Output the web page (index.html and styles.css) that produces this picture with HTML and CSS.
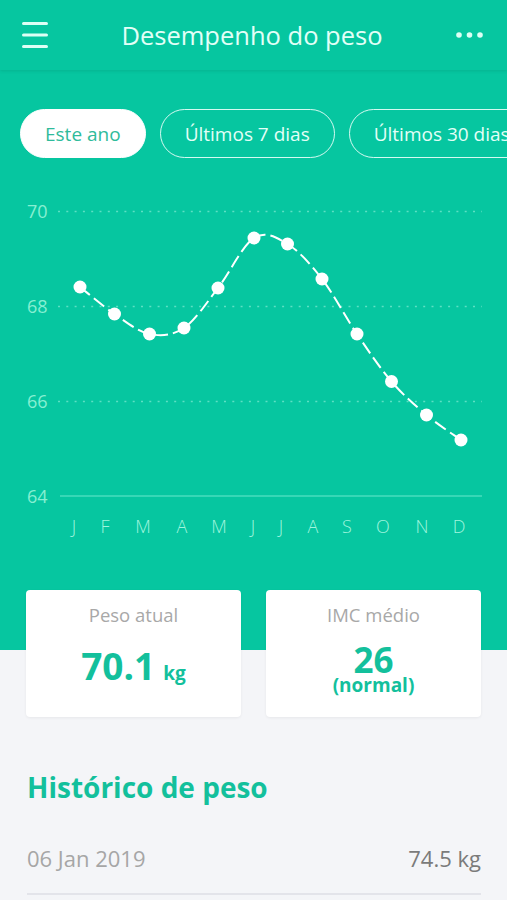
FILE: index.html
```html
<!DOCTYPE html>
<html lang="pt">
<head>
<meta charset="utf-8">
<title>Desempenho do peso</title>
<link rel="stylesheet" href="styles.css">
</head>
<body>
<div class="app">
  <section class="hero">
    <header class="topbar">
      <button class="icon-btn" aria-label="Menu">
        <svg width="26" height="26" viewBox="0 0 26 26"><g stroke="#dcfff5" stroke-width="3" stroke-linecap="round"><line x1="1.5" y1="1.5" x2="24.5" y2="1.5"/><line x1="1.5" y1="13" x2="24.5" y2="13"/><line x1="1.5" y1="24.5" x2="24.5" y2="24.5"/></g></svg>
      </button>
      <h1 class="title">Desempenho do peso</h1>
      <button class="icon-btn" aria-label="Mais">
        <svg width="27" height="8" viewBox="0 0 27 8"><g fill="#dcfff5"><circle cx="3" cy="4" r="2.8"/><circle cx="13.5" cy="4" r="2.8"/><circle cx="24" cy="4" r="2.8"/></g></svg>
      </button>
    </header>

    <nav class="filters">
      <span class="pill pill-active">Este ano</span>
      <span class="pill">Últimos 7 dias</span>
      <span class="pill">Últimos 30 dias</span>
    </nav>

    <svg class="chart" width="507" height="350" viewBox="0 0 507 350">
      <g class="grid">
        <line x1="58" y1="21.5" x2="482" y2="21.5" class="dotted"/>
        <line x1="58" y1="116.5" x2="482" y2="116.5" class="dotted"/>
        <line x1="58" y1="211.5" x2="482" y2="211.5" class="dotted"/>
        <line x1="60" y1="306" x2="482" y2="306" class="solid"/>
      </g>
      <g class="ylabels">
        <text x="27" y="28">70</text>
        <text x="27" y="123">68</text>
        <text x="27" y="218">66</text>
        <text x="27" y="313">64</text>
      </g>
      <path class="curve" d="M80,97 C85.75,101.5 102.92,116.17 114.5,124 C126.08,131.83 137.92,141.67 149.5,144 C161.08,146.33 172.58,145.67 184,138 C195.42,130.33 206.33,113 218,98 C229.67,83 242.42,55.33 254,48 C265.58,40.67 276.17,47.17 287.5,54 C298.83,60.83 310.42,74 322,89 C333.58,104 345.42,126.92 357,144 C368.58,161.08 379.92,178 391.5,191.5 C403.08,205 414.92,215.25 426.5,225 C438.08,234.75 455.25,245.83 461,250"/>
      <g class="points">
        <circle cx="80" cy="97" r="6.5"/>
        <circle cx="114.5" cy="124" r="6.5"/>
        <circle cx="149.5" cy="144" r="6.5"/>
        <circle cx="184" cy="138" r="6.5"/>
        <circle cx="218" cy="98" r="6.5"/>
        <circle cx="254" cy="48" r="6.5"/>
        <circle cx="287.5" cy="54" r="6.5"/>
        <circle cx="322" cy="89" r="6.5"/>
        <circle cx="357" cy="144" r="6.5"/>
        <circle cx="391.5" cy="191.5" r="6.5"/>
        <circle cx="426.5" cy="225" r="6.5"/>
        <circle cx="461" cy="250" r="6.5"/>
      </g>
      <g class="xlabels">
        <text x="74" y="343">J</text>
        <text x="105" y="343">F</text>
        <text x="143" y="343">M</text>
        <text x="182" y="343">A</text>
        <text x="219" y="343">M</text>
        <text x="253" y="343">J</text>
        <text x="281" y="343">J</text>
        <text x="313" y="343">A</text>
        <text x="347" y="343">S</text>
        <text x="383" y="343">O</text>
        <text x="422" y="343">N</text>
        <text x="459" y="343">D</text>
      </g>
    </svg>
  </section>

  <section class="stats">
    <div class="card">
      <div class="card-label">Peso atual</div>
      <div class="card-value"><span class="big">70.1</span><span class="unit">kg</span></div>
    </div>
    <div class="card">
      <div class="card-label">IMC médio</div>
      <div class="card-value card-value-col"><span class="big big-imc">26</span><span class="note">(normal)</span></div>
    </div>
  </section>

  <section class="history">
    <h2 class="history-title">Histórico de peso</h2>
    <ul class="history-list">
      <li class="history-row"><span class="date">06 Jan 2019</span><span class="weight">74.5 kg</span></li>
    </ul>
  </section>
</div>
</body>
</html>
```

FILE: styles.css
```css
* { box-sizing: border-box; }

html, body {
  margin: 0;
  padding: 0;
  background: #f4f5f8;
  font-family: "Open Sans", "Noto Sans", sans-serif;
}

.app {
  width: 507px;
  height: 900px;
  overflow: hidden;
}

.hero {
  background: #06c6a0;
  padding-bottom: 110px;
}

.topbar {
  height: 70px;
  display: flex;
  align-items: center;
  justify-content: space-between;
  padding: 0 24px 0 22px;
  box-shadow: 0 1px 3px rgba(0, 90, 70, 0.18);
}

.icon-btn {
  background: none;
  border: 0;
  padding: 0;
  display: flex;
  align-items: center;
  cursor: pointer;
}

.title {
  margin: 0;
  font-size: 25.5px;
  font-weight: 400;
  color: #e2fff7;
}

.filters {
  margin-top: 39px;
  padding-left: 20px;
  display: flex;
  gap: 14px;
  overflow: hidden;
  white-space: nowrap;
}

.pill {
  flex-shrink: 0;
  height: 49px;
  display: flex;
  align-items: center;
  padding: 0 24px;
  border: 1.5px solid rgba(235, 255, 250, 0.9);
  border-radius: 25px;
  font-size: 19px;
  color: #e2fff7;
}

.pill-active {
  background: #fff;
  border-color: #fff;
  color: #2fbb9b;
}

.chart {
  display: block;
  margin-top: 32px;
}

.grid .dotted {
  stroke: rgba(200, 255, 240, 0.45);
  stroke-width: 1.5;
  stroke-dasharray: 2 6.3;
}

.grid .solid {
  stroke: rgba(170, 255, 235, 0.6);
  stroke-width: 1.2;
}

.ylabels text {
  font-family: "Open Sans", sans-serif;
  font-size: 18px;
  fill: #86efd2;
}

.xlabels text {
  font-family: "Open Sans", sans-serif;
  font-size: 18px;
  font-weight: 300;
  fill: #a0f5de;
  text-anchor: middle;
}

.curve {
  fill: none;
  stroke: #fff;
  stroke-width: 2;
  stroke-dasharray: 13 5;
}

.points circle {
  fill: #fff;
}

.stats {
  margin-top: -60px;
  padding: 0 26px;
  display: grid;
  grid-template-columns: 1fr 1fr;
  gap: 25px;
}

.card {
  height: 127px;
  background: #fff;
  border-radius: 4px;
  box-shadow: 0 1px 3px rgba(0, 0, 0, 0.06);
  display: flex;
  flex-direction: column;
  align-items: center;
  padding-top: 13px;
}

.card-label {
  font-size: 18.5px;
  color: #a8a8a8;
  line-height: 24px;
}

.card-value {
  margin-top: 19px;
  display: flex;
  align-items: baseline;
  gap: 8px;
  color: #13c09c;
  font-weight: 700;
}

.card-value-col {
  margin-top: 18px;
  flex-direction: column;
  align-items: center;
  gap: 0;
}

.big {
  font-size: 37px;
  line-height: 40px;
}

.big-imc {
  font-size: 35px;
  line-height: 30px;
}

.unit {
  font-size: 19px;
}

.note {
  font-size: 19px;
  line-height: 20px;
}

.history {
  padding: 0 26px 0 27px;
}

.history-title {
  margin: 52px 0 0;
  font-size: 28px;
  line-height: 36px;
  font-weight: 700;
  color: #13c09c;
}

.history-list {
  list-style: none;
  margin: 39px 0 0;
  padding: 0;
}

.history-row {
  display: flex;
  justify-content: space-between;
  align-items: baseline;
  padding-bottom: 21px;
  border-bottom: 2px solid #e3e4ea;
  font-size: 22px;
  line-height: 28px;
}

.date {
  color: #a6a6a6;
}

.weight {
  color: #7b7b7b;
}
```
